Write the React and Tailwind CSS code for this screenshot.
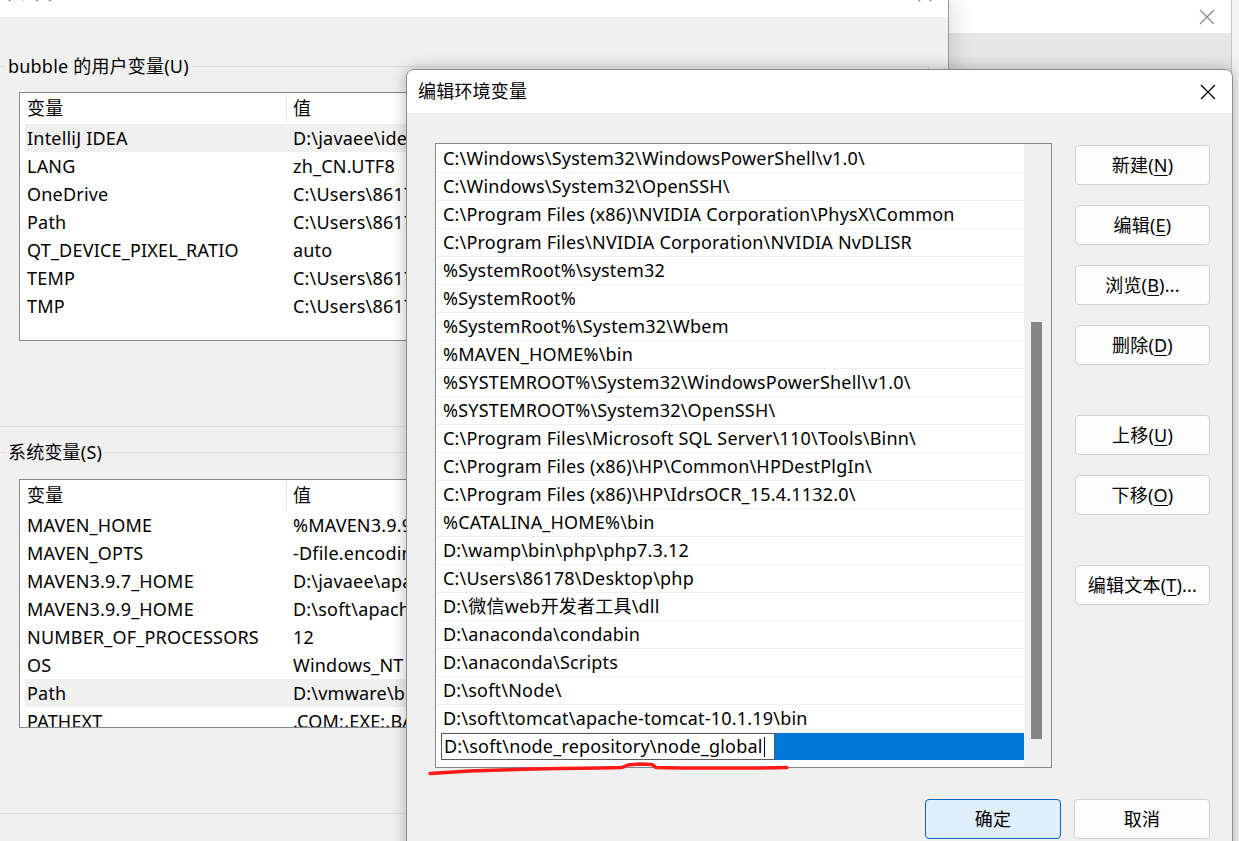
import React from "react";

const userVars = [
  ["IntelliJ IDEA", "D:\\javaee\\idea\\IntelliJ IDEA 2023.3\\bin;", true],
  ["LANG", "zh_CN.UTF8"],
  ["OneDrive", "C:\\Users\\86178\\OneDrive"],
  ["Path", "C:\\Users\\86178\\AppData\\Local\\Microsoft\\WindowsApps;"],
  ["QT_DEVICE_PIXEL_RATIO", "auto"],
  ["TEMP", "C:\\Users\\86178\\AppData\\Local\\Temp"],
  ["TMP", "C:\\Users\\86178\\AppData\\Local\\Temp"],
];

const sysVars = [
  ["MAVEN_HOME", "%MAVEN3.9.9_HOME%"],
  ["MAVEN_OPTS", "-Dfile.encoding=UTF-8"],
  ["MAVEN3.9.7_HOME", "D:\\javaee\\apache-maven-3.9.7"],
  ["MAVEN3.9.9_HOME", "D:\\soft\\apache-maven-3.9.9"],
  ["NUMBER_OF_PROCESSORS", "12"],
  ["OS", "Windows_NT"],
  ["Path", "D:\\vmware\\bin\\;C:\\Windows\\system32;", true],
  ["PATHEXT", ".COM;.EXE;.BAT;.CMD;.VBS"],
];

const paths = [
  "C:\\Windows\\System32\\WindowsPowerShell\\v1.0\\",
  "C:\\Windows\\System32\\OpenSSH\\",
  "C:\\Program Files (x86)\\NVIDIA Corporation\\PhysX\\Common",
  "C:\\Program Files\\NVIDIA Corporation\\NVIDIA NvDLISR",
  "%SystemRoot%\\system32",
  "%SystemRoot%",
  "%SystemRoot%\\System32\\Wbem",
  "%MAVEN_HOME%\\bin",
  "%SYSTEMROOT%\\System32\\WindowsPowerShell\\v1.0\\",
  "%SYSTEMROOT%\\System32\\OpenSSH\\",
  "C:\\Program Files\\Microsoft SQL Server\\110\\Tools\\Binn\\",
  "C:\\Program Files (x86)\\HP\\Common\\HPDestPlgIn\\",
  "C:\\Program Files (x86)\\HP\\IdrsOCR_15.4.1132.0\\",
  "%CATALINA_HOME%\\bin",
  "D:\\wamp\\bin\\php\\php7.3.12",
  "C:\\Users\\86178\\Desktop\\php",
  "D:\\微信web开发者工具\\dll",
  "D:\\anaconda\\condabin",
  "D:\\anaconda\\Scripts",
  "D:\\soft\\Node\\",
  "D:\\soft\\tomcat\\apache-tomcat-10.1.19\\bin",
];

function VarList({ rows }) {
  return (
    <div className="ml-[19px] w-[890px] h-[249px] border border-[#828790] bg-white overflow-hidden">
      <div className="flex items-center h-[31px]">
        <div className="w-[266px] pl-[7px]">变量</div>
        <div className="w-px h-[29px] bg-[#e5e5e5]" />
        <div className="pl-[6px]">值</div>
      </div>
      {rows.map(([name, value, hl]) => (
        <div
          key={name}
          className={`ml-[5px] flex items-center h-[28px] whitespace-nowrap ${hl ? "bg-[#f0f0f0]" : ""}`}
        >
          <div className="w-[268px] pl-[2px]">{name}</div>
          <div>{value}</div>
        </div>
      ))}
    </div>
  );
}

function Group({ label, rows, mt, h, listGap }) {
  return (
    <div className={`${mt} ${h} w-[929px] border-t border-r border-b border-[#dcdcdc]`}>
      <div className="-mt-[13px] ml-[6px] w-fit px-[2px] bg-[#f0f0f0] leading-[24px]">{label}</div>
      <div className={listGap}>
        <VarList rows={rows} />
      </div>
    </div>
  );
}

function CloseX({ color = "#000", size = 16 }) {
  return (
    <svg width={size} height={size} viewBox="0 0 16 16" fill="none">
      <path d="M1 1L15 15M15 1L1 15" stroke={color} strokeWidth="1.3" />
    </svg>
  );
}

function Btn({ children, primary }) {
  return (
    <div
      className={`h-[40px] flex items-center justify-center rounded-[4px] border ${
        primary ? "bg-[#e0eef9] border-[#0067c0]" : "bg-[#fdfdfd] border-[#d0d0d0]"
      }`}
    >
      {children}
    </div>
  );
}

function Key({ c }) {
  return <span className="underline underline-offset-[3px] decoration-1">{c}</span>;
}

function Dialog() {
  return (
    <div className="absolute left-[406px] top-[69px] w-[827px] h-[800px] flex flex-col rounded-t-[8px] border border-[#8c8c8c] bg-[#f0f0f0] shadow-[0_0_16px_rgba(0,0,0,0.28)] overflow-hidden z-20">
      <div className="h-[43px] bg-white flex items-center justify-between pl-[11px] pr-[16px] shrink-0">
        <span>编辑环境变量</span>
        <CloseX />
      </div>
      <div className="flex pt-[30px] pl-[28px]">
        <div className="w-[617px] h-[625px] border border-[#828790] bg-white flex">
          <div className="w-[588px] pt-[1px]">
            {paths.map((p) => (
              <div key={p} className="h-[28px] leading-[27px] border-b border-[#f0f0f0] pl-[7px] whitespace-nowrap overflow-hidden">
                {p}
              </div>
            ))}
            <div className="h-[28px] flex">
              <div className="ml-[5px] w-[334px] h-[27px] border border-[#5a5a5a] bg-white flex items-center pl-[2px] whitespace-nowrap overflow-hidden">
                <span>D:\soft\node_repository\node_global</span>
                <span className="ml-[1px] w-px h-[20px] shrink-0 bg-black" />
              </div>
              <div className="flex-1 h-[27px] bg-[#0078d7]" />
            </div>
          </div>
          <div className="w-[27px] h-full bg-[#f0f0f0] pt-[178px] pl-[7px]">
            <div className="w-[11px] h-[417px] bg-[#858585]" />
          </div>
        </div>
        <div className="ml-[23px] mt-[2px] w-[135px] flex flex-col">
          <Btn>新建(<Key c="N" />)</Btn>
          <div className="mt-[20px]"><Btn>编辑(<Key c="E" />)</Btn></div>
          <div className="mt-[20px]"><Btn>浏览(<Key c="B" />)...</Btn></div>
          <div className="mt-[20px]"><Btn>删除(<Key c="D" />)</Btn></div>
          <div className="mt-[50px]"><Btn>上移(<Key c="U" />)</Btn></div>
          <div className="mt-[20px]"><Btn>下移(<Key c="O" />)</Btn></div>
          <div className="mt-[50px]"><Btn>编辑文本(<Key c="T" />)...</Btn></div>
        </div>
      </div>
      <div className="flex justify-end gap-[13px] pr-[22px] mt-[31px]">
        <div className="w-[136px]"><Btn primary>确定</Btn></div>
        <div className="w-[136px]"><Btn>取消</Btn></div>
      </div>
    </div>
  );
}

export default function App() {
  return (
    <div className="relative w-[1239px] h-[841px] overflow-hidden bg-[#f3f3f3] text-[18px] tracking-[0.2px] text-black font-['Noto_Sans','Noto_Sans_CJK_SC',sans-serif]">
      <div className="flex h-full">
        {/* 环境变量 window */}
        <div className="relative z-10 w-[949px] h-full shrink-0 flex flex-col bg-[#f0f0f0] border-r border-[#9a9a9a] shadow-[6px_0_18px_rgba(0,0,0,0.12)]">
          <div className="h-[17px] bg-white overflow-hidden flex justify-between pr-[16px] shrink-0">
            <div className="-mt-[20px] leading-[24px] -ml-[2px] text-[#333]">环境变量</div>
            <div className="-mt-[12px]"><CloseX color="#777" size={14} /></div>
          </div>
          <Group label="bubble 的用户变量(U)" rows={userVars} mt="mt-[49px]" h="h-[361px]" listGap="mt-[14px]" />
          <Group label="系统变量(S)" rows={sysVars} mt="mt-[25px]" h="h-[362px]" listGap="mt-[15px]" />
        </div>
        {/* window further behind */}
        <div className="w-[283px] h-full shrink-0 flex flex-col border-r border-[#c4c4c4] bg-gradient-to-b from-[#e6e6e6] to-[#efefef]">
          <div className="h-[33px] bg-white flex items-center justify-end pr-[16px]">
            <CloseX color="#8a8a8a" size={16} />
          </div>
        </div>
        <div className="flex-1 bg-[#f3f3f3]" />
      </div>
      <Dialog />
      <svg className="absolute left-0 top-0 z-30 pointer-events-none" width="1239" height="841">
        <path
          d="M430 773.5 L446 772.5 L470 771 L500 770 L533 769 L560 768.5 L600 768 L622 767.5 L628 765 L640 764 L652 764.5 L656 767.5 L680 768 L720 768 L760 768 L787 767.5"
          stroke="#ff1a1a"
          strokeWidth="3.5"
          fill="none"
          strokeLinecap="round"
          strokeLinejoin="round"
        />
      </svg>
    </div>
  );
}
